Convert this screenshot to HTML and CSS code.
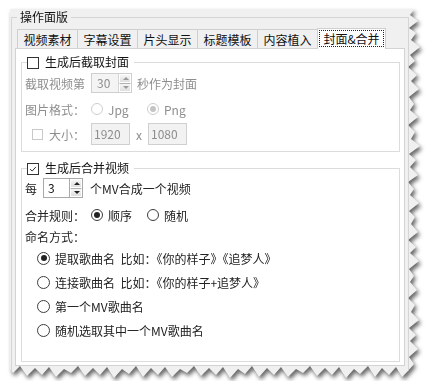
FILE: index.html
```html
<!DOCTYPE html>
<html lang="zh-CN">
<head>
    <meta charset="UTF-8">
    <meta name="viewport" content="width=device-width, initial-scale=1.0">
    <title>操作面版</title>
    <link rel="stylesheet" href="styles.css">
</head>
<body>
    <div class="shot">
        <div class="window">
            <fieldset class="outer">
                <legend>操作面版</legend>

                <div class="tabs">
                    <span class="tab">视频素材</span>
                    <span class="tab">字幕设置</span>
                    <span class="tab">片头显示</span>
                    <span class="tab">标题模板</span>
                    <span class="tab">内容植入</span>
                    <span class="tab active"><span class="focus">封面&amp;合并</span></span>
                </div>

                <div class="panel">
                    <!-- cover -->
                    <fieldset class="group">
                        <legend><span class="check"></span>生成后截取封面</legend>
                        <div class="row off gap4">
                            <span class="label">截取视频第</span>
                            <span class="spin wide">
                                <span class="spin-val">30</span>
                                <span class="spin-btns"><i class="up"></i><i class="down"></i></span>
                            </span>
                            <span class="after">秒作为封面</span>
                        </div>
                        <div class="row off gap6">
                            <span class="label">图片格式：</span>
                            <span class="opt"><span class="radio"></span>Jpg</span>
                            <span class="opt"><span class="radio on"></span>Png</span>
                        </div>
                        <div class="row tall off gap4">
                            <span class="check small"></span>
                            <span class="size-label">大小：</span>
                            <span class="field">1920</span>
                            <span class="times">x</span>
                            <span class="field">1080</span>
                        </div>
                    </fieldset>

                    <!-- merge -->
                    <fieldset class="group merge">
                        <legend>
                            <span class="check on">
                                <svg viewBox="0 0 12 12"><path d="M2.5 6 L5 8.5 L9.5 3.5"/></svg>
                            </span>生成后合并视频
                        </legend>
                        <div class="row gap3">
                            <span class="every">每</span>
                            <span class="spin">
                                <span class="spin-val">3</span>
                                <span class="spin-btns"><i class="up"></i><i class="down"></i></span>
                            </span>
                            <span class="after wide-gap">个MV合成一个视频</span>
                        </div>
                        <div class="row gap7">
                            <span class="label">合并规则：</span>
                            <span class="opt"><span class="radio on"></span>顺序</span>
                            <span class="opt"><span class="radio"></span>随机</span>
                        </div>
                        <div class="row gap1">命名方式：</div>
                        <div class="names">
                            <div class="name"><span class="radio on"></span>提取歌曲名&nbsp;&nbsp;比如：《你的样子》《追梦人》</div>
                            <div class="name"><span class="radio"></span>连接歌曲名&nbsp;&nbsp;比如：《你的样子+追梦人》</div>
                            <div class="name"><span class="radio"></span>第一个MV歌曲名</div>
                            <div class="name"><span class="radio"></span>随机选取其中一个MV歌曲名</div>
                        </div>
                    </fieldset>
                </div>
            </fieldset>
        </div>
    </div>
</body>
</html>
```

FILE: styles.css
```css
* {
    box-sizing: border-box;
}

body {
    margin: 0;
    background-color: #fff;
    font-family: "Noto Sans CJK SC", "Noto Sans", sans-serif;
    font-size: 12px;
    color: #222;
}

/* torn screenshot edge */
.shot {
    margin: 9px 0 0 10px;
    width: 412px;
    filter: drop-shadow(2px 3px 2px rgba(0, 0, 0, 0.6));
}

.window {
    width: 412px;
    height: 372px;
    background-color: #f0f0f0;
    padding: 1px 0 0 1px;
    clip-path: polygon(
        0 0, 404px 0, 400px 6px, 408px 12px, 399px 19px, 406px 24px, 401px 31px, 410px 38px,
        400px 46px, 405px 52px, 398px 58px, 407px 66px, 401px 72px, 409px 80px, 399px 88px,
        404px 95px, 400px 101px, 408px 108px, 398px 116px, 405px 123px, 401px 130px, 410px 137px,
        399px 145px, 406px 151px, 400px 158px, 408px 166px, 398px 173px, 404px 180px, 400px 186px,
        409px 194px, 399px 202px, 405px 208px, 401px 215px, 408px 223px, 398px 231px, 406px 238px,
        400px 244px, 409px 252px, 399px 260px, 404px 267px, 400px 273px, 407px 281px, 398px 289px,
        405px 296px, 401px 303px, 409px 311px, 399px 319px, 406px 326px, 400px 332px, 408px 340px,
        399px 348px, 404px 355px, 398px 362px,
        392px 368px, 386px 358px, 379px 366px, 372px 359px, 365px 368px, 358px 357px, 350px 365px,
        344px 360px, 336px 369px, 329px 358px, 322px 366px, 315px 359px, 307px 367px, 300px 357px,
        293px 364px, 286px 360px, 278px 368px, 271px 358px, 264px 366px, 257px 359px, 249px 368px,
        242px 357px, 235px 365px, 228px 360px, 220px 369px, 213px 358px, 206px 366px, 199px 359px,
        191px 367px, 184px 357px, 177px 364px, 170px 360px, 162px 368px, 155px 358px, 148px 366px,
        141px 359px, 133px 368px, 126px 357px, 119px 365px, 112px 360px, 104px 369px, 97px 358px,
        90px 366px, 83px 359px, 75px 367px, 68px 357px, 61px 364px, 54px 360px, 46px 368px,
        39px 358px, 32px 366px, 25px 359px, 17px 367px, 10px 357px, 3px 364px, 0 360px
    );
}

.outer {
    margin: 0;
    width: 398px;
    height: 372px;
    padding: 4px 3px 0 3px;
    border: 1px solid #d5d5d5;
}

.outer > legend {
    margin-left: 2px;
    padding: 0 3px;
    line-height: 14px;
    color: #111;
}

/* tabs */
.tabs {
    display: flex;
    height: 21px;
    margin-left: 2px;
    position: relative;
    z-index: 1;
}

.tab {
    width: 60px;
    height: 19px;
    margin-top: 1px;
    border: 1px solid #cfcfcf;
    border-right: none;
    border-bottom: none;
    background-color: #f0f0f0;
    text-align: center;
    line-height: 19px;
    color: #111;
}

.tab.active {
    width: 69px;
    height: 21px;
    margin-top: 0;
    border-right: 1px solid #cfcfcf;
    background-color: #fff;
    padding: 1px 1px 2px;
}

.focus {
    display: block;
    height: 100%;
    border: 1px dotted #222;
    line-height: 16px;
}

.panel {
    margin-top: -1px;
    width: 390px;
    height: 318px;
    border: 1px solid #d3d3d3;
    background-color: #fff;
    padding: 6px 4px 3px 5px;
    display: flex;
    flex-direction: column;
}

/* group boxes */
.group {
    margin: 0;
    padding: 0 3px 6px;
    border: 1px solid #dcdcdc;
}

.group legend {
    margin-left: 2px;
    padding: 0 5px 0 0;
    line-height: 14px;
    height: 14px;
    color: #111;
}

.group legend .check {
    vertical-align: -2px;
    margin-right: 6px;
}

.merge {
    margin-top: 9px;
    flex: 1;
}

.row {
    display: flex;
    align-items: center;
    height: 20px;
    white-space: nowrap;
}

.row.tall {
    height: 22px;
}

.gap1 { margin-top: 1px; }
.gap3 { margin-top: 3px; }
.gap4 { margin-top: 4px; }
.gap6 { margin-top: 6px; }
.gap7 { margin-top: 7px; }

.off {
    color: #8e8e8e;
}

.label {
    width: 66px;
}

.after {
    margin-left: 5px;
}

.after.wide-gap {
    margin-left: 7px;
}

.every {
    width: 18px;
}

.opt {
    width: 56px;
    display: flex;
    align-items: center;
}

.opt .radio {
    margin-right: 5px;
}

/* checkbox */
.check {
    display: inline-block;
    width: 12px;
    height: 12px;
    border: 1px solid #333;
    background-color: #fff;
    flex-shrink: 0;
}

.check svg {
    display: block;
    width: 10px;
    height: 10px;
    fill: none;
    stroke: #333;
    stroke-width: 1.2;
}

.check.small {
    width: 11px;
    height: 11px;
    margin-left: 7px;
    border-color: #c9c9c9;
}

.size-label {
    margin-left: 6px;
    width: 42px;
}

/* radio */
.radio {
    display: inline-block;
    position: relative;
    width: 12px;
    height: 12px;
    border: 1px solid #3c3c3c;
    border-radius: 50%;
    background-color: #fff;
    flex-shrink: 0;
}

.radio.on::after {
    content: "";
    position: absolute;
    left: 2px;
    top: 2px;
    width: 6px;
    height: 6px;
    border-radius: 50%;
    background-color: #222;
}

.off .radio {
    border-color: #cdcdcd;
}

.off .radio.on::after {
    background-color: #c4c4c4;
}

/* spin box */
.spin {
    display: flex;
    width: 40px;
    height: 20px;
    border: 1px solid #a9a9a9;
    background-color: #fff;
}

.spin.wide {
    width: 41px;
}

.spin-val {
    flex: 1;
    padding-left: 4px;
    line-height: 18px;
    color: #111;
}

.spin-btns {
    width: 13px;
    display: flex;
    flex-direction: column;
    border-left: 1px solid #a9a9a9;
}

.spin-btns i {
    flex: 1;
    position: relative;
    background: linear-gradient(#f6f6f6, #dedede);
    border: 1px solid #fff;
}

.spin-btns i + i {
    border-top: 1px solid #b0b0b0;
}

.spin-btns i::after {
    content: "";
    position: absolute;
    left: 3px;
    top: 2px;
    border-left: 3px solid transparent;
    border-right: 3px solid transparent;
}

.spin-btns .up::after {
    border-bottom: 3px solid #222;
}

.spin-btns .down::after {
    border-top: 3px solid #222;
}

.off .spin {
    border-color: #cfcfcf;
    background-color: #f4f4f4;
}

.off .spin-val {
    color: #8e8e8e;
    padding-left: 5px;
}

.off .spin-btns {
    border-left-color: #d6d6d6;
}

.off .spin-btns .up::after {
    border-bottom-color: #9a9a9a;
}

.off .spin-btns .down::after {
    border-top-color: #9a9a9a;
}

/* disabled size fields */
.field {
    width: 39px;
    height: 22px;
    border: 1px solid #d0d0d0;
    background-color: #f2f2f2;
    padding-left: 2px;
    line-height: 20px;
}

.times {
    width: 18px;
    text-align: center;
}

/* naming options */
.names {
    display: flex;
    flex-direction: column;
}

.name {
    display: flex;
    align-items: center;
    height: 24px;
    padding-left: 12px;
    white-space: nowrap;
}

.name .radio {
    width: 13px;
    height: 13px;
    margin-right: 5px;
}

.name .radio.on::after {
    left: 2.5px;
    top: 2.5px;
}
```
